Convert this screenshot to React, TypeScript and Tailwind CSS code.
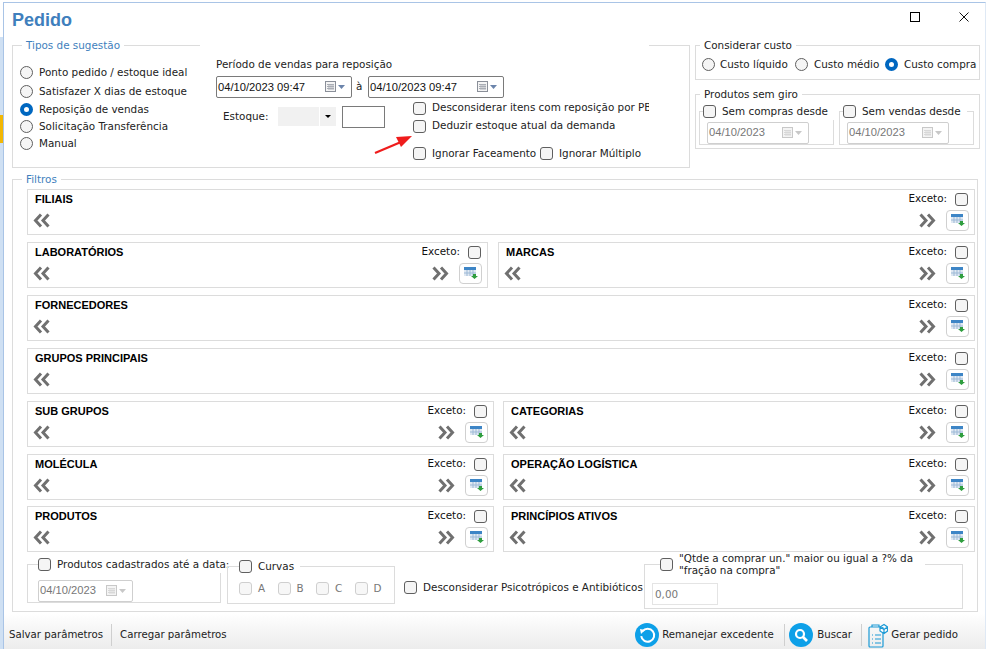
const font = "font-['DejaVu_Sans',sans-serif]";

const Radio = ({ on }: { on?: boolean }) => (
    on ? (
        <span className="block h-[13px] w-[13px] shrink-0 rounded-full border-[4px] border-[#0067c0] bg-white" />
    ) : (
        <span className="block h-[13px] w-[13px] shrink-0 rounded-full border border-[#5f5f5f] bg-[#f5f5f5]" />
    )
);

const Check = ({ off }: { off?: boolean }) => (
    <span className={`block h-[13px] w-[13px] shrink-0 rounded-[3px] border ${off ? "border-[#cfcfcf] bg-[#f7f7f7]" : "border-[#5f5f5f] bg-[#f5f5f5]"}`} />
);

const CalendarIcon = ({ off }: { off?: boolean }) => (
    <svg width="21" height="12" viewBox="0 0 21 12">
        <rect x="0.5" y="0.5" width="10" height="10" fill="#f4f4f4" stroke={off ? "#c8c8c8" : "#8a8f99"} />
        <path d="M2 3.500h7M2 5.500h7M2 7.500h7M4 3v6M6 3v6M8 3v6" stroke={off ? "#d8d8d8" : "#a9adb5"} strokeWidth="1" />
        <path d="M13 4h7l-3.500 4z" fill={off ? "#c8c8c8" : "#6b84ab"} />
    </svg>
);

const DateBox = ({ value, off, wide }: { value: string; off?: boolean; wide?: boolean }) => (
    <div className={`flex h-[22px] items-center justify-between rounded-[2px] border pl-[1px] pr-[5px] font-['Liberation_Sans',sans-serif] text-[11.200px] ${wide ? "w-[136px] border-[#7a7a7a] text-[#111]" : "border-[#cfcfcf] text-[#777]"} ${off && !wide ? "w-full" : ""}`}>
        <span>{value}</span>
        <CalendarIcon off={off} />
    </div>
);

const Chevrons = ({ dir }: { dir: "left" | "right" }) => (
    <svg width="17" height="15" viewBox="0 0 17 15" className={dir === "left" ? "rotate-180" : ""}>
        <path d="M1.500 1.500 7 7.500 1.500 13.500M9 1.500 14.500 7.500 9 13.500" fill="none" stroke="#707070" strokeWidth="3" />
    </svg>
);

const GridButton = () => (
    <span className="flex h-[21px] w-[23px] items-center justify-center rounded-[4px] border border-[#d0d0d0] bg-white">
        <svg width="14" height="12" viewBox="0 0 14 12">
            <rect x="0" y="0" width="12" height="9" fill="#dfe8f2" />
            <rect x="0" y="0" width="12" height="3" fill="#3d85c6" />
            <path d="M3 3v6M6 3v6M9 3v6M0 6h12" stroke="#9db9d6" strokeWidth="1" />
            <path d="M9 7h3v2h2l-3.500 3L7 9h2z" fill="#2f9e3f" />
        </svg>
    </span>
);

const FilterBox = ({ title, className = "" }: { title: string; className?: string }) => (
    <div className={`flex h-[46px] flex-col border border-[#dcdcdc] pl-[5px] pr-[5px] ${className}`}>
        <div className="flex h-[16px] items-center justify-between pr-[1px] pt-[2px]">
            <span className="pl-[2px] font-['Liberation_Sans',sans-serif] text-[11px] font-bold text-black">{title}</span>
            <span className="flex items-center gap-[8px] text-[#111]">
                Exceto:
                <Check />
            </span>
        </div>
        <div className="flex flex-1 items-center justify-between">
            <Chevrons dir="left" />
            <span className="flex items-center gap-[10px]">
                <Chevrons dir="right" />
                <GridButton />
            </span>
        </div>
    </div>
);

const FilterRow = ({ left, right, leftWidth, gap }: { left: string; right: string; leftWidth: string; gap: string }) => (
    <div className={`flex ${gap}`}>
        <FilterBox title={left} className={leftWidth} />
        <FilterBox title={right} className="flex-1" />
    </div>
);

const Legend = ({ children, className = "" }: { children: React.ReactNode; className?: string }) => (
    <legend className={`px-[4px] leading-[13px] ${className}`}>{children}</legend>
);

const Sep = () => <span className="block h-[22px] w-px bg-[#cfcfcf]" />;

const tipos = [
    { label: "Ponto pedido / estoque ideal", gap: "mb-[2px]" },
    { label: "Satisfazer X dias de estoque", gap: "mb-[1px]" },
    { label: "Reposição de vendas", on: true },
    { label: "Solicitação Transferência" },
    { label: "Manual" },
];

export default function App() {
    return (
        <div className={`${font} relative h-[649px] w-[988px] overflow-hidden bg-white pl-[3px] pr-[2px] pt-[2px] text-[10.400px] text-[#222]`}>
            <span className="absolute bottom-0 left-0 top-[37px] w-[3px] bg-[#cfe0f3]" />
            <span className="absolute left-0 top-[115px] h-[28px] w-[3px] bg-[#f2b705]" />
            <div className="relative flex h-full flex-col border-l border-r border-t border-l-[#a9c4e6] border-r-[#dfe9f5] border-t-[#a9c4e6] bg-white">
                <div className="flex h-[36px] items-start justify-between">
                    <h1 className="pl-[8px] pt-[5px] font-['Liberation_Sans',sans-serif] text-[18px] font-bold leading-[24px] text-[#3f7fbd]">Pedido</h1>
                    <div className="flex items-center gap-[39px] pr-[16px] pt-[9px]">
                        <span className="block h-[10px] w-[10px] border border-black" />
                        <svg width="10" height="10" viewBox="0 0 10 10">
                            <path d="M.5.5l9 9M9.500.5l-9 9" stroke="#111" strokeWidth="1" />
                        </svg>
                    </div>
                </div>

                <div className="flex gap-[5px] pl-[8px]">
                    <fieldset className="relative h-[129px] w-[678px] min-w-0 shrink-0 border border-[#dcdcdc]">
                        <Legend className="ml-[9px] text-[#3f7fbd]">Tipos de sugestão</Legend>
                        <div className="flex">
                            <div className="flex w-[187px] flex-col pl-[7px] pt-[12px]">
                                {tipos.map(t => (
                                    <label key={t.label} className={`flex h-[17px] items-center gap-[6px] whitespace-nowrap ${t.gap ?? ""}`}>
                                        <Radio on={t.on} />
                                        {t.label}
                                    </label>
                                ))}
                            </div>
                            <div className="-mt-[11px] h-[118px] w-[449px] bg-white pl-[16px] pt-[15px]">
                                <p className="h-[16px] leading-[16px]">Período de vendas para reposição</p>
                                <div className="mt-[4px] flex items-center gap-[4px]">
                                    <DateBox value="04/10/2023 09:47" wide />
                                    <span className="w-[8px]">à</span>
                                    <DateBox value="04/10/2023 09:47" wide />
                                </div>
                                <div className="flex">
                                    <div className="flex h-[22px] w-[197px] items-center pl-[7px] pt-[15px]">
                                        <span className="w-[55px]">Estoque:</span>
                                        <span className="h-[19px] w-[41px] shrink-0 bg-[#f1f1f1]" />
                                        <span className="ml-[1px] flex h-[19px] w-[16px] shrink-0 items-center justify-center bg-[#f1f1f1]">
                                            <span className="h-0 w-0 border-x-[3px] border-t-[3px] border-x-transparent border-t-black" />
                                        </span>
                                        <span className="ml-[6px] h-[22px] w-[43px] shrink-0 border border-[#7a7a7a] bg-white" />
                                    </div>
                                    <div className="flex flex-col pt-[1px]">
                                        <label className="flex h-[18px] w-[236px] items-center gap-[6px] overflow-hidden whitespace-nowrap"><Check />Desconsiderar itens com reposição por PBM</label>
                                        <label className="flex h-[18px] items-center gap-[6px] whitespace-nowrap"><Check />Deduzir estoque atual da demanda</label>
                                        <div className="mt-[11px] flex items-center gap-[6px] whitespace-nowrap">
                                            <Check /><span className="w-[102px]">Ignorar Faceamento</span>
                                            <Check />Ignorar Múltiplo
                                        </div>
                                    </div>
                                </div>
                            </div>
                        </div>
                        <svg width="42" height="26" viewBox="0 0 42 26" className="absolute left-[360px] top-[79px]">
                            <path d="M2 22 28 11" stroke="#ef1c1c" strokeWidth="2.200" />
                            <path d="M39 5 23 6l5 10z" fill="#ef1c1c" />
                        </svg>
                    </fieldset>

                    <div className="flex w-[285px] shrink-0 flex-col gap-[8px]">
                        <fieldset className="h-[41px] min-w-0 border border-[#dcdcdc]">
                            <Legend className="ml-[4px]">Considerar custo</Legend>
                            <div className="flex items-center whitespace-nowrap pl-[6px] pt-[5px]">
                                <Radio /><span className="ml-[5px] w-[75px]">Custo líquido</span>
                                <Radio /><span className="ml-[6px] w-[71px]">Custo médio</span>
                                <Radio on /><span className="ml-[6px]">Custo compra</span>
                            </div>
                        </fieldset>
                        <fieldset className="h-[61px] min-w-0 border border-[#dcdcdc]">
                            <Legend className="ml-[4px]">Produtos sem giro</Legend>
                            <div className="flex gap-[5px] pl-[3px] pt-[3px]">
                                <fieldset className="h-[41px] w-[135px] min-w-0 border border-[#dcdcdc] pl-[7px]">
                                    <legend className="-ml-[4px] flex items-center gap-[6px] whitespace-nowrap pr-[6px]"><Check />Sem compras desde</legend>
                                    <div className="w-[102px] pt-[2px]"><DateBox value="04/10/2023" off /></div>
                                </fieldset>
                                <fieldset className="h-[41px] w-[135px] min-w-0 border border-[#dcdcdc] pl-[7px]">
                                    <legend className="-ml-[4px] flex items-center gap-[6px] whitespace-nowrap pr-[6px]"><Check />Sem vendas desde</legend>
                                    <div className="w-[102px] pt-[2px]"><DateBox value="04/10/2023" off /></div>
                                </fieldset>
                            </div>
                        </fieldset>
                    </div>
                </div>

                <fieldset className="ml-[8px] mt-[5px] h-[439px] w-[966px] min-w-0 border border-[#dcdcdc]">
                    <Legend className="ml-[9px] text-[#3f7fbd]">Filtros</Legend>
                    <div className="flex flex-col gap-[7px] pl-[14px] pr-[2px] pt-[3px]">
                        <FilterBox title="FILIAIS" />
                        <FilterRow left="LABORATÓRIOS" right="MARCAS" leftWidth="w-[461px]" gap="gap-[10px]" />
                        <FilterBox title="FORNECEDORES" />
                        <FilterBox title="GRUPOS PRINCIPAIS" />
                        <FilterRow left="SUB GRUPOS" right="CATEGORIAS" leftWidth="w-[467px]" gap="gap-[9px]" />
                        <FilterRow left="MOLÉCULA" right="OPERAÇÃO LOGÍSTICA" leftWidth="w-[467px]" gap="gap-[9px]" />
                        <div className="-mt-px">
                            <FilterRow left="PRODUTOS" right="PRINCÍPIOS ATIVOS" leftWidth="w-[467px]" gap="gap-[9px]" />
                        </div>
                    </div>
                    <div className="flex items-start pl-[14px] pt-[5px]">
                        <fieldset className="h-[46px] w-[194px] min-w-0 shrink-0 border border-[#dcdcdc] pl-[10px]">
                            <legend className="flex items-center gap-[6px] whitespace-nowrap"><Check />Produtos cadastrados até a data:</legend>
                            <div className="w-[95px] pt-[7px]"><DateBox value="04/10/2023" off /></div>
                        </fieldset>
                        <fieldset className="ml-[6px] mt-[2px] h-[45px] w-[168px] min-w-0 shrink-0 border border-[#dcdcdc] pl-[11px]">
                            <legend className="flex items-center gap-[6px] pr-[6px]"><Check />Curvas</legend>
                            <div className="flex items-center pt-[6px] text-[#777]">
                                {["A", "B", "C", "D"].map(c => (
                                    <span key={c} className="flex w-[38.500px] items-center gap-[6px]"><Check off />{c}</span>
                                ))}
                            </div>
                        </fieldset>
                        <label className="ml-[9px] mt-[23px] flex w-[240px] shrink-0 items-center gap-[6px] whitespace-nowrap"><Check />Desconsiderar Psicotrópicos e Antibióticos</label>
                        <fieldset className="-mt-[5px] h-[57px] w-[319px] min-w-0 shrink-0 border border-[#dcdcdc] pl-[7px]">
                            <legend className="ml-[8px] flex w-[265px] items-center gap-[6px] leading-[12px]"><Check /><span>"Qtde a comprar un." maior ou igual a ?% da "fração na compra"</span></legend>
                            <div className="mt-[7px] h-[22px] w-[66px] border border-[#e4e4e4] pl-[2px] leading-[20px] text-[#777]">0,00</div>
                        </fieldset>
                    </div>
                </fieldset>

                <div className="mt-auto flex h-[36px] items-center justify-between bg-gradient-to-b from-white to-[#ececec] pl-[5px] pr-[27px] pt-[8px] text-[10.200px] text-[#222]">
                    <div className="flex items-center gap-[8px] whitespace-nowrap">
                        <span>Salvar parâmetros</span>
                        <Sep />
                        <span>Carregar parâmetros</span>
                    </div>
                    <div className="flex items-center whitespace-nowrap">
                        <svg width="24" height="24" viewBox="0 0 24 24">
                            <circle cx="12" cy="12" r="12" fill="#0ea0e8" />
                            <path d="M7 9a6.500 6.500 0 1 1-.5 5" fill="none" stroke="#fff" strokeWidth="2" transform="rotate(10 12 12)" />
                            <path d="M5 6l5 1-4 4z" fill="#fff" />
                        </svg>
                        <span className="ml-[3px] w-[113px]">Remanejar excedente</span>
                        <span className="ml-[9px]"><Sep /></span>
                        <span className="ml-[4px] flex"><svg width="24" height="24" viewBox="0 0 24 24">
                            <circle cx="12" cy="12" r="12" fill="#0ea0e8" />
                            <circle cx="11" cy="11" r="4" fill="none" stroke="#fff" strokeWidth="2.200" />
                            <path d="M14 14l4 4" stroke="#fff" strokeWidth="2.600" />
                        </svg></span>
                        <span className="ml-[4px] w-[35px]">Buscar</span>
                        <span className="ml-[9px]"><Sep /></span>
                        <span className="ml-[6px] flex"><svg width="20" height="25" viewBox="0 0 20 25" fill="none" stroke="#1c9ad6" strokeWidth="1.200">
                            <rect x="1" y="4" width="14" height="20" rx="1" />
                            <path d="M4 4V2h7v2M4 12h1M7 12h6M4 16h1M7 16h6M4 20h1M7 20h6" />
                            <path d="M12 4l4-2.500 3.500 2.500v4L16 10.500 12 8zM12 4l4 2.500 3.500-2.500M16 6.500v4" fill="#fff" />
                        </svg></span>
                        <span className="ml-[3px]">Gerar pedido</span>
                    </div>
                </div>
            </div>
        </div>
    );
}
